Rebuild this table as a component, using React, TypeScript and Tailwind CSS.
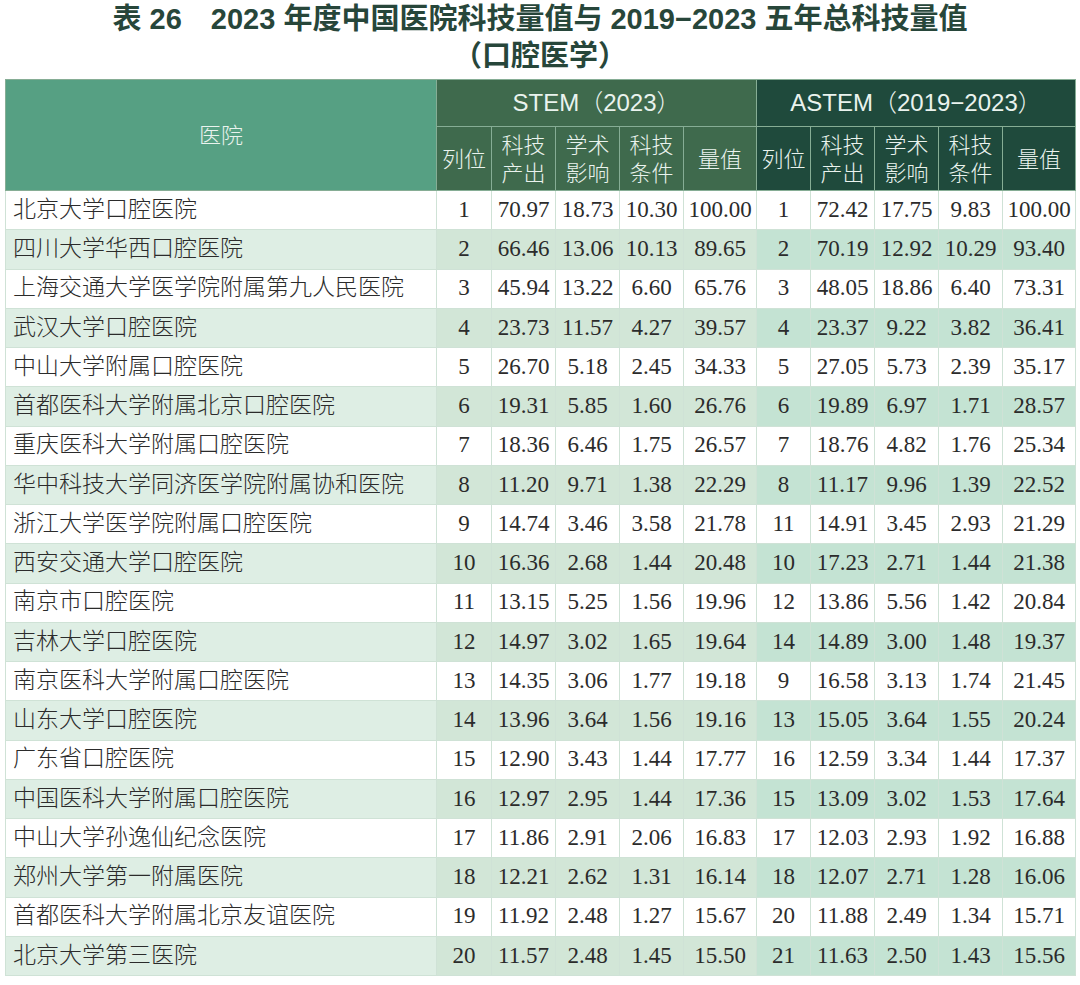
const rows: [string, string[], string[]][] = [
  ["北京大学口腔医院", ["1", "70.97", "18.73", "10.30", "100.00"], ["1", "72.42", "17.75", "9.83", "100.00"]],
  ["四川大学华西口腔医院", ["2", "66.46", "13.06", "10.13", "89.65"], ["2", "70.19", "12.92", "10.29", "93.40"]],
  ["上海交通大学医学院附属第九人民医院", ["3", "45.94", "13.22", "6.60", "65.76"], ["3", "48.05", "18.86", "6.40", "73.31"]],
  ["武汉大学口腔医院", ["4", "23.73", "11.57", "4.27", "39.57"], ["4", "23.37", "9.22", "3.82", "36.41"]],
  ["中山大学附属口腔医院", ["5", "26.70", "5.18", "2.45", "34.33"], ["5", "27.05", "5.73", "2.39", "35.17"]],
  ["首都医科大学附属北京口腔医院", ["6", "19.31", "5.85", "1.60", "26.76"], ["6", "19.89", "6.97", "1.71", "28.57"]],
  ["重庆医科大学附属口腔医院", ["7", "18.36", "6.46", "1.75", "26.57"], ["7", "18.76", "4.82", "1.76", "25.34"]],
  ["华中科技大学同济医学院附属协和医院", ["8", "11.20", "9.71", "1.38", "22.29"], ["8", "11.17", "9.96", "1.39", "22.52"]],
  ["浙江大学医学院附属口腔医院", ["9", "14.74", "3.46", "3.58", "21.78"], ["11", "14.91", "3.45", "2.93", "21.29"]],
  ["西安交通大学口腔医院", ["10", "16.36", "2.68", "1.44", "20.48"], ["10", "17.23", "2.71", "1.44", "21.38"]],
  ["南京市口腔医院", ["11", "13.15", "5.25", "1.56", "19.96"], ["12", "13.86", "5.56", "1.42", "20.84"]],
  ["吉林大学口腔医院", ["12", "14.97", "3.02", "1.65", "19.64"], ["14", "14.89", "3.00", "1.48", "19.37"]],
  ["南京医科大学附属口腔医院", ["13", "14.35", "3.06", "1.77", "19.18"], ["9", "16.58", "3.13", "1.74", "21.45"]],
  ["山东大学口腔医院", ["14", "13.96", "3.64", "1.56", "19.16"], ["13", "15.05", "3.64", "1.55", "20.24"]],
  ["广东省口腔医院", ["15", "12.90", "3.43", "1.44", "17.77"], ["16", "12.59", "3.34", "1.44", "17.37"]],
  ["中国医科大学附属口腔医院", ["16", "12.97", "2.95", "1.44", "17.36"], ["15", "13.09", "3.02", "1.53", "17.64"]],
  ["中山大学孙逸仙纪念医院", ["17", "11.86", "2.91", "2.06", "16.83"], ["17", "12.03", "2.93", "1.92", "16.88"]],
  ["郑州大学第一附属医院", ["18", "12.21", "2.62", "1.31", "16.14"], ["18", "12.07", "2.71", "1.28", "16.06"]],
  ["首都医科大学附属北京友谊医院", ["19", "11.92", "2.48", "1.27", "15.67"], ["20", "11.88", "2.49", "1.34", "15.71"]],
  ["北京大学第三医院", ["20", "11.57", "2.48", "1.45", "15.50"], ["21", "11.63", "2.50", "1.43", "15.56"]],
];

const subHeads = [["列位"], ["科技", "产出"], ["学术", "影响"], ["科技", "条件"], ["量值"]];
const widths = [55, 64, 64, 64, 73, 54, 64, 64, 64, 73];

const SubHead = ({ lines, dark }: { lines: string[]; dark: boolean }) => (
  <th
    className={`border border-[#86ad95] font-light leading-[28px] px-0 pt-[2px] ${dark ? "bg-[#1f4a3c]" : "bg-[#3f6a4d]"}`}
  >
    {lines.map((l) => (
      <div key={l} className="h-[28px]">
        {l}
      </div>
    ))}
  </th>
);

export default function App() {
  return (
    <div className="w-[1080px] h-[985px] bg-white overflow-hidden">
      <div
        className="h-[79px] pt-[1px] text-center font-bold text-[#27463a] text-[29px] leading-[37px]"
        style={{ fontFamily: '"Liberation Sans", "Noto Sans CJK SC", sans-serif' }}
      >
        <div>表 26　2023 年度中国医院科技量值与 2019−2023 五年总科技量值</div>
        <div>（口腔医学）</div>
      </div>
      <table
        className="ml-[5px] w-[1070px] table-fixed border-collapse text-[#2b2b2b]"
        style={{ fontFamily: '"Liberation Serif", "Noto Sans CJK SC", serif' }}
      >
        <colgroup>
          <col style={{ width: 431 }} />
          {widths.map((w, i) => (
            <col key={i} style={{ width: w }} />
          ))}
        </colgroup>
        <thead
          className="text-[#eaf3ee] text-[22px]"
          style={{ fontFamily: '"Liberation Sans", "Noto Sans CJK SC", sans-serif' }}
        >
          <tr className="h-[47px]">
            <th rowSpan={2} className="bg-[#56a083] border border-[#86ad95] font-light">
              医院
            </th>
            <th colSpan={5} className="bg-[#3f6a4d] border border-[#86ad95] font-light text-[24px]">
              STEM（2023）
            </th>
            <th colSpan={5} className="bg-[#1f4a3c] border border-[#86ad95] font-light text-[24px]">
              ASTEM（2019−2023）
            </th>
          </tr>
          <tr className="h-[64px]">
            {subHeads.map((s, i) => (
              <SubHead key={"a" + i} lines={s} dark={false} />
            ))}
            {subHeads.map((s, i) => (
              <SubHead key={"b" + i} lines={s} dark={true} />
            ))}
          </tr>
        </thead>
        <tbody className="text-[23px]">
          {rows.map(([name, stem, astem], r) => {
            const shaded = r % 2 === 1;
            return (
              <tr key={name} className="h-[39.25px]">
                <td
                  className={`border border-[#cfe2d6] pl-[7px] whitespace-nowrap font-light ${shaded ? "bg-[#deeee4]" : "bg-white"}`}
                >
                  {name}
                </td>
                {stem.map((v, i) => (
                  <td
                    key={"s" + i}
                    className={`border border-[#cfe2d6] text-center px-0 ${shaded ? "bg-[#d2e6d7]" : "bg-white"}`}
                  >
                    {v}
                  </td>
                ))}
                {astem.map((v, i) => (
                  <td
                    key={"t" + i}
                    className={`border border-[#cfe2d6] text-center px-0 ${shaded ? "bg-[#c4e3d3]" : "bg-white"}`}
                  >
                    {v}
                  </td>
                ))}
              </tr>
            );
          })}
        </tbody>
      </table>
    </div>
  );
}
